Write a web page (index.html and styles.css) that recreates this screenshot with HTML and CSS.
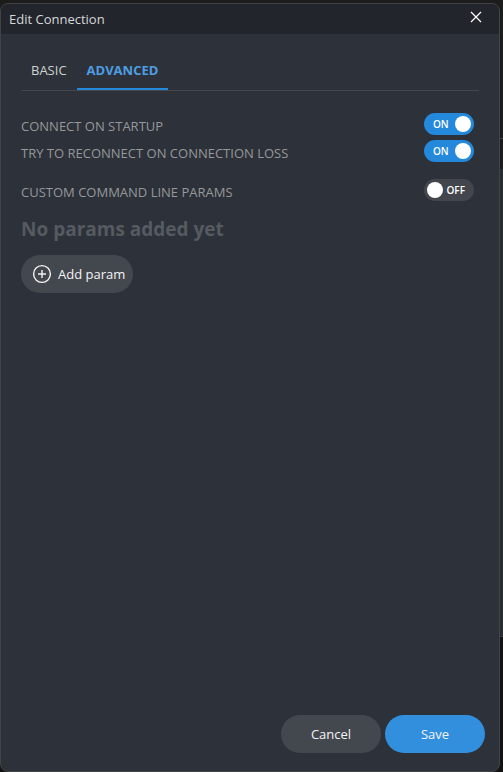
FILE: index.html
```html
<!DOCTYPE html>
<html lang="en">
<head>
<meta charset="utf-8">
<meta name="viewport" content="width=device-width, initial-scale=1">
<title>Edit Connection</title>
<link rel="stylesheet" href="styles.css">
</head>
<body>
<form class="dialog" role="dialog" aria-labelledby="title">
  <header class="titlebar">
    <h1 class="title" id="title">Edit Connection</h1>
    <button class="close" type="button" aria-label="Close">
      <svg width="12" height="12" viewBox="0 0 12 12" fill="none" stroke="currentColor" stroke-width="1.2"><path d="M1 1l10 10M11 1L1 11"/></svg>
    </button>
  </header>
  <main class="content">
    <div class="tabs" role="tablist">
      <button class="tab" type="button" role="tab" aria-selected="false">BASIC</button>
      <button class="tab tab-active" type="button" role="tab" aria-selected="true">ADVANCED</button>
    </div>
    <div class="settings">
      <div class="setting">
        <label for="startup">CONNECT ON STARTUP</label>
        <span class="switch"><input type="checkbox" id="startup" checked><span class="on">ON</span><span class="off">OFF</span></span>
      </div>
      <div class="setting">
        <label for="reconnect">TRY TO RECONNECT ON CONNECTION LOSS</label>
        <span class="switch"><input type="checkbox" id="reconnect" checked><span class="on">ON</span><span class="off">OFF</span></span>
      </div>
      <div class="setting setting-group">
        <label for="params">CUSTOM COMMAND LINE PARAMS</label>
        <span class="switch"><input type="checkbox" id="params"><span class="on">ON</span><span class="off">OFF</span></span>
      </div>
    </div>
    <p class="empty">No params added yet</p>
    <button class="button add" type="button">
      <svg width="20" height="20" viewBox="0 0 20 20" fill="none" stroke="currentColor" stroke-width="1.4"><circle cx="10" cy="10" r="8.4"/><path d="M10 6v8M6 10h8"/></svg>
      Add param
    </button>
  </main>
  <footer class="actions">
    <button class="button action" type="button">Cancel</button>
    <button class="button action primary" type="submit">Save</button>
  </footer>
</form>
</body>
</html>
```
FILE: styles.css
```css
* {
  box-sizing: border-box;
}

body {
  margin: 0;
  min-height: 100vh;
  display: flex;
  padding: 3px 3px 0 0;
  font: 13px/18px "Open Sans", "Noto Sans", sans-serif;
  color: #e6e7e8;
  background: linear-gradient(#1c1c1c 138px, #424242 138px 139px, #1c1c1c 139px 169px, #292b30 169px 636px, #3c3c3c 636px 637px, #121212 637px);
}

button {
  margin: 0;
  padding: 0;
  border: 0;
  background: none;
  color: inherit;
  font: inherit;
}

.dialog {
  flex: 1;
  display: flex;
  flex-direction: column;
  border: 1px solid #424344;
  border-radius: 8px;
  background: #2d3139;
  overflow: hidden;
}

.titlebar {
  display: flex;
  justify-content: space-between;
  align-items: center;
  height: 30px;
  padding: 0 16px 0 8px;
  background: #22252c;
}

.title {
  margin: 0;
  font-size: 13px;
  font-weight: 400;
  color: #d6d7d9;
}

.close {
  display: flex;
  padding: 0 1px 4px;
  color: #fff;
}

.content {
  flex: 1;
  padding: 16px 20px 0;
}

.tabs {
  display: flex;
  height: 41px;
  border-bottom: 1px solid #44474e;
}

.tab {
  height: 40px;
  padding: 0 10px;
  color: #d0d1d3;
}

.tab-active {
  border-bottom: 2px solid #2488db;
  padding-top: 2px;
  font-weight: 700;
  color: #4d9ee2;
}

.settings {
  display: flex;
  flex-direction: column;
  gap: 5px;
  padding: 22px 5px 0 0;
}

.setting {
  display: flex;
  justify-content: space-between;
  align-items: flex-end;
  color: #96989b;
}

.setting-group {
  margin-top: 12px;
}

.switch {
  position: relative;
  display: flex;
  height: 22px;
}

.switch input {
  appearance: none;
  width: 50px;
  height: 22px;
  margin: 0;
  border-radius: 11px;
  background: #43474d;
}

.switch input::before {
  content: "";
  display: block;
  width: 16px;
  height: 16px;
  margin: 3px;
  border-radius: 50%;
  background: #fff;
}

.switch input:checked {
  background: #2488db;
}

.switch input:checked::before {
  margin-left: 31px;
}

.on,
.off {
  position: absolute;
  top: 0;
  font-size: 10px;
  line-height: 22px;
  font-weight: 600;
  color: #fff;
  pointer-events: none;
}

.on {
  left: 9px;
}

.off {
  right: 9px;
}

.switch input:checked ~ .off,
.switch input:not(:checked) ~ .on {
  display: none;
}

.empty {
  margin: 14px 0 12px;
  font-size: 19px;
  line-height: 28px;
  font-weight: 700;
  color: #565a61;
}

.button {
  height: 38px;
  border-radius: 19px;
  background: #43474e;
  font-weight: 500;
  color: #f4f4f5;
}

.add {
  display: flex;
  align-items: center;
  gap: 6px;
  padding: 0 8px 0 11px;
}

.actions {
  display: flex;
  justify-content: flex-end;
  gap: 4px;
  padding: 0 14px 18px;
}

.action {
  width: 100px;
}

.primary {
  background: #328fde;
}
```
